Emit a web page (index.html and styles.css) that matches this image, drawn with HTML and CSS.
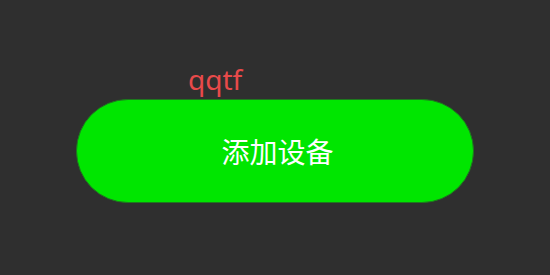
FILE: index.html
```html
<!DOCTYPE html>
<html lang="zh">
<head>
<meta charset="utf-8">
<link rel="stylesheet" href="styles.css">
</head>
<body>
<div class="stage">
  <div class="label">qqtf</div>
  <button class="add-btn">添加设备</button>
</div>
</body>
</html>
```
FILE: styles.css
```css
html, body {
  margin: 0;
  padding: 0;
  width: 550px;
  height: 275px;
  background: #2f2f2f;
  overflow: hidden;
}
.stage {
  display: flex;
  flex-direction: column;
  align-items: flex-start;
  padding: 60px 0 0 76px;
}
.label {
  font-family: "Noto Sans", "Noto Sans CJK SC", sans-serif;
  font-size: 28px;
  line-height: 38px;
  color: #e84a4a;
  margin-left: 112px;
  height: 39px;
}
.add-btn {
  width: 398px;
  height: 104px;
  border-radius: 52px;
  border: 1px solid #1d7a1d;
  background: #00e600;
  color: #ffffff;
  font-family: "Noto Sans CJK SC", sans-serif;
  font-size: 28px;
  padding: 0;
  display: flex;
  align-items: center;
  justify-content: center;
  padding-left: 5px;
}
```
